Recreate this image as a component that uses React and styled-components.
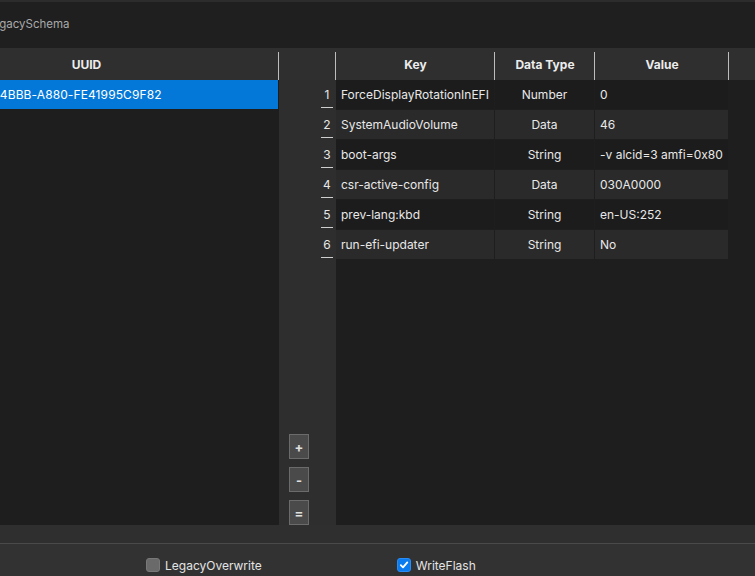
import React from 'react'
import styled, { createGlobalStyle } from 'styled-components'

const GlobalStyle = createGlobalStyle`
    html, body {
        margin: 0;
        padding: 0;
        background: #1e1e1e;
        overflow: hidden;
    }
    * { box-sizing: border-box; }
`

const rows = [
    { key: 'ForceDisplayRotationInEFI', type: 'Number', value: '0' },
    { key: 'SystemAudioVolume', type: 'Data', value: '46' },
    { key: 'boot-args', type: 'String', value: '-v alcid=3 amfi=0x80' },
    { key: 'csr-active-config', type: 'Data', value: '030A0000' },
    { key: 'prev-lang:kbd', type: 'String', value: 'en-US:252' },
    { key: 'run-efi-updater', type: 'String', value: 'No' },
]

const App = () => {
    return (
        <>
            <GlobalStyle />
            <Window>
                <TopStrip />
                <TitleBar>
                    <Title>LegacySchema</Title>
                </TitleBar>

                <Main>
                    <LeftPane>
                        <LeftInner>
                            <HeaderCell $width={385} $center>UUID</HeaderCell>
                            <UuidRow>7C436110-AB2A-4BBB-A880-FE41995C9F82</UuidRow>
                        </LeftInner>
                    </LeftPane>

                    <NumColumn>
                        <HeaderCell $width={57} />
                        {rows.map((r, i) => (
                            <NumCell key={r.key}>
                                <Num>{i + 1}</Num>
                                <Dash />
                            </NumCell>
                        ))}
                        <Buttons>
                            <SmallButton>+</SmallButton>
                            <SmallButton>-</SmallButton>
                            <SmallButton>=</SmallButton>
                        </Buttons>
                    </NumColumn>

                    <TablePane>
                        <HeaderRow>
                            <HeaderCell $width={159} $center>Key</HeaderCell>
                            <HeaderCell $width={100} $center>Data Type</HeaderCell>
                            <HeaderCell $width={134} $center>Value</HeaderCell>
                        </HeaderRow>
                        {rows.map((r, i) => (
                            <Row key={r.key}>
                                <Cell $width={159} $alt={i % 2 === 1}>{r.key}</Cell>
                                <Cell $width={100} $alt={i % 2 === 1} $center>{r.type}</Cell>
                                <Cell $width={134} $alt={i % 2 === 1}>{r.value}</Cell>
                            </Row>
                        ))}
                    </TablePane>
                </Main>

                <BottomStrip />

                <Footer>
                    <CheckLabel>
                        <Box />
                        LegacyOverwrite
                    </CheckLabel>
                    <CheckLabel>
                        <Box $checked>
                            <svg width="10" height="10" viewBox="0 0 10 10">
                                <path d="M1.8 5.2 L4 7.4 L8.3 2.4" fill="none" stroke="#fff" strokeWidth="1.8" strokeLinecap="round" strokeLinejoin="round" />
                            </svg>
                        </Box>
                        WriteFlash
                    </CheckLabel>
                </Footer>
            </Window>
        </>
    )
}

export default App

const Window = styled.div`
    width: 755px;
    height: 576px;
    display: flex;
    flex-direction: column;
    font-family: Inter, "Liberation Sans", sans-serif;
    font-size: 12px;
    color: #e6e6e6;
    background: #1e1e1e;
    overflow: hidden;
`;

const TopStrip = styled.div`
    height: 2px;
    background: #2c2c2c;
`;

const TitleBar = styled.div`
    height: 46px;
    display: flex;
    align-items: center;
    background: #1f1f1f;
    overflow: hidden;
`;

const Title = styled.span`
    margin-left: -14px;
    color: #a9a9a9;
    font-size: 11.5px;
    padding-bottom: 3px;
`;

const Main = styled.div`
    height: 477px;
    display: flex;
`;

const LeftPane = styled.div`
    width: 279px;
    flex-shrink: 0;
    overflow: hidden;
    background: #1e1e1e;
`;

const LeftInner = styled.div`
    width: 385px;
    margin-left: -106px;
`;

const HeaderCell = styled.div`
    position: relative;
    width: ${p => p.$width}px;
    flex-shrink: 0;
    height: 32px;
    display: flex;
    align-items: center;
    justify-content: ${p => p.$center ? 'center' : 'flex-start'};
    background: #2f2f2f;
    font-weight: 700;
    color: #ececec;
    padding-top: 1px;

    &::after {
        content: '';
        position: absolute;
        right: 0;
        top: 4px;
        bottom: 0;
        width: 1px;
        background: #bdbdbd;
    }
`;

const UuidRow = styled.div`
    height: 29px;
    display: flex;
    align-items: center;
    padding-left: 7px;
    padding-right: 1px;
    background: #0478d8;
    background-clip: content-box;
    color: #ffffff;
    font-size: 12px;
    letter-spacing: 0.1px;
`;

const NumColumn = styled.div`
    width: 57px;
    flex-shrink: 0;
    display: flex;
    flex-direction: column;
    align-items: flex-end;
    background: #2e2e2e;
`;

const NumCell = styled.div`
    width: 12px;
    height: 30px;
    margin-right: 3px;
    display: flex;
    flex-direction: column;
    align-items: center;
    justify-content: flex-end;
`;

const Num = styled.div`
    flex: 1;
    display: flex;
    align-items: center;
    color: #e6e6e6;
    padding-top: 1px;
`;

const Dash = styled.div`
    width: 12px;
    height: 1px;
    margin-bottom: 2px;
    background: #cfcfcf;
`;

const Buttons = styled.div`
    margin-top: auto;
    align-self: flex-start;
    margin-left: 10px;
    display: flex;
    flex-direction: column;
    gap: 8px;
`;

const SmallButton = styled.div`
    width: 20px;
    height: 25px;
    display: flex;
    align-items: center;
    justify-content: center;
    background: #4a4a4a;
    border: 1px solid #6b6b6b;
    color: #e0e0e0;
    font-size: 13px;
    font-weight: 700;
`;

const TablePane = styled.div`
    flex: 1;
    background: #1e1e1e;
`;

const HeaderRow = styled.div`
    display: flex;
    background: #2f2f2f;
`;

const Row = styled.div`
    display: flex;
    height: 30px;
`;

const Cell = styled.div`
    width: ${p => p.$width}px;
    flex-shrink: 0;
    height: 30px;
    display: flex;
    align-items: center;
    justify-content: ${p => p.$center ? 'center' : 'flex-start'};
    padding: 0 5px;
    border-right: 1px solid #1e1e1e;
    border-bottom: 1px solid #1e1e1e;
    background: ${p => p.$alt ? '#2a2a2a' : '#1c1c1c'};
    color: #e8e8e8;
    white-space: nowrap;
    overflow: hidden;
`;

const BottomStrip = styled.div`
    height: 19px;
    background: #2f2f2f;
    border-bottom: 1px solid #4a4a4a;
`;

const Footer = styled.div`
    flex: 1;
    display: flex;
    align-items: center;
    gap: 135px;
    padding-left: 146px;
    padding-top: 10px;
    background: #323232;
`;

const CheckLabel = styled.label`
    display: flex;
    align-items: center;
    gap: 5px;
    color: #e4e4e4;
    font-size: 12px;
`;

const Box = styled.span`
    width: 14px;
    height: 14px;
    border-radius: 3px;
    display: flex;
    align-items: center;
    justify-content: center;
    background: ${p => p.$checked ? '#0a7cf0' : '#6a6a6a'};
    border: 1px solid ${p => p.$checked ? '#2a8cf5' : '#787878'};
`;
